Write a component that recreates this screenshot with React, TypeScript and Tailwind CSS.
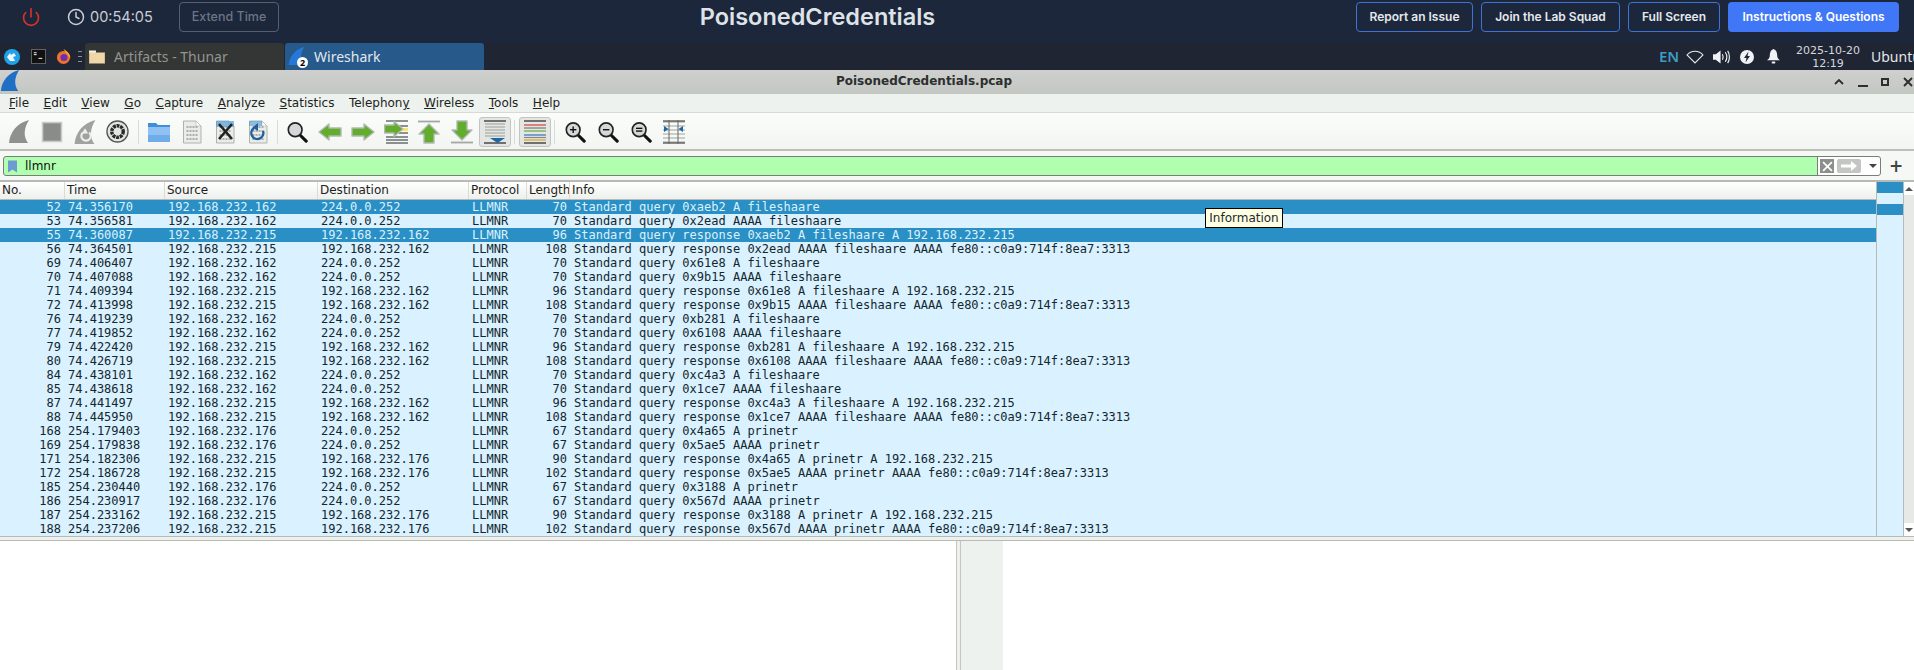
import { Clock, Power } from "lucide-react"

const rows = [
    ["52", "74.356170", "192.168.232.162", "224.0.0.252", "70", "Standard query 0xaeb2 A fileshaare"],
    ["53", "74.356581", "192.168.232.162", "224.0.0.252", "70", "Standard query 0x2ead AAAA fileshaare"],
    ["55", "74.360087", "192.168.232.215", "192.168.232.162", "96", "Standard query response 0xaeb2 A fileshaare A 192.168.232.215"],
    ["56", "74.364501", "192.168.232.215", "192.168.232.162", "108", "Standard query response 0x2ead AAAA fileshaare AAAA fe80::c0a9:714f:8ea7:3313"],
    ["69", "74.406407", "192.168.232.162", "224.0.0.252", "70", "Standard query 0x61e8 A fileshaare"],
    ["70", "74.407088", "192.168.232.162", "224.0.0.252", "70", "Standard query 0x9b15 AAAA fileshaare"],
    ["71", "74.409394", "192.168.232.215", "192.168.232.162", "96", "Standard query response 0x61e8 A fileshaare A 192.168.232.215"],
    ["72", "74.413998", "192.168.232.215", "192.168.232.162", "108", "Standard query response 0x9b15 AAAA fileshaare AAAA fe80::c0a9:714f:8ea7:3313"],
    ["76", "74.419239", "192.168.232.162", "224.0.0.252", "70", "Standard query 0xb281 A fileshaare"],
    ["77", "74.419852", "192.168.232.162", "224.0.0.252", "70", "Standard query 0x6108 AAAA fileshaare"],
    ["79", "74.422420", "192.168.232.215", "192.168.232.162", "96", "Standard query response 0xb281 A fileshaare A 192.168.232.215"],
    ["80", "74.426719", "192.168.232.215", "192.168.232.162", "108", "Standard query response 0x6108 AAAA fileshaare AAAA fe80::c0a9:714f:8ea7:3313"],
    ["84", "74.438101", "192.168.232.162", "224.0.0.252", "70", "Standard query 0xc4a3 A fileshaare"],
    ["85", "74.438618", "192.168.232.162", "224.0.0.252", "70", "Standard query 0x1ce7 AAAA fileshaare"],
    ["87", "74.441497", "192.168.232.215", "192.168.232.162", "96", "Standard query response 0xc4a3 A fileshaare A 192.168.232.215"],
    ["88", "74.445950", "192.168.232.215", "192.168.232.162", "108", "Standard query response 0x1ce7 AAAA fileshaare AAAA fe80::c0a9:714f:8ea7:3313"],
    ["168", "254.179403", "192.168.232.176", "224.0.0.252", "67", "Standard query 0x4a65 A prinetr"],
    ["169", "254.179838", "192.168.232.176", "224.0.0.252", "67", "Standard query 0x5ae5 AAAA prinetr"],
    ["171", "254.182306", "192.168.232.215", "192.168.232.176", "90", "Standard query response 0x4a65 A prinetr A 192.168.232.215"],
    ["172", "254.186728", "192.168.232.215", "192.168.232.176", "102", "Standard query response 0x5ae5 AAAA prinetr AAAA fe80::c0a9:714f:8ea7:3313"],
    ["185", "254.230440", "192.168.232.176", "224.0.0.252", "67", "Standard query 0x3188 A prinetr"],
    ["186", "254.230917", "192.168.232.176", "224.0.0.252", "67", "Standard query 0x567d AAAA prinetr"],
    ["187", "254.233162", "192.168.232.215", "192.168.232.176", "90", "Standard query response 0x3188 A prinetr A 192.168.232.215"],
    ["188", "254.237206", "192.168.232.215", "192.168.232.176", "102", "Standard query response 0x567d AAAA prinetr AAAA fe80::c0a9:714f:8ea7:3313"],
]

const columns = [
    { label: "No.", width: "w-[65px]" },
    { label: "Time", width: "w-[100px]" },
    { label: "Source", width: "w-[153px]" },
    { label: "Destination", width: "w-[151px]" },
    { label: "Protocol", width: "w-[58px]" },
    { label: "Length", width: "w-[43px]" },
]

const menus: [string, string, string][] = [
    ["", "F", "ile"],
    ["", "E", "dit"],
    ["", "V", "iew"],
    ["", "G", "o"],
    ["", "C", "apture"],
    ["", "A", "nalyze"],
    ["", "S", "tatistics"],
    ["Telephon", "y", ""],
    ["", "W", "ireless"],
    ["", "T", "ools"],
    ["", "H", "elp"],
]

function Fin({ className, fill }: { className?: string; fill: string }) {
    return (
        <svg viewBox="0 0 20 23" className={className}>
            <path d="M0 23 C1 12 8 3 20 0 C15 8 14 16 19 23 Z" fill={fill} />
        </svg>
    )
}

function Magnifier({ mark }: { mark?: "plus" | "minus" | "equal" }) {
    return (
        <svg viewBox="0 0 24 24" className="w-[22px] h-[22px]">
            <line x1="15" y1="15" x2="22" y2="22" stroke="#111" strokeWidth="3.4" strokeLinecap="round" />
            <circle cx="10" cy="9.5" r="7.5" fill="#d5d8d8" stroke="#222" strokeWidth="1.8" />
            {mark && <line x1="6.5" y1={mark === "equal" ? 8 : 9.5} x2="13.5" y2={mark === "equal" ? 8 : 9.5} stroke="#111" strokeWidth="1.5" />}
            {mark === "equal" && <line x1="6.5" y1="11" x2="13.5" y2="11" stroke="#111" strokeWidth="1.5" />}
            {mark === "plus" && <line x1="10" y1="6" x2="10" y2="13" stroke="#111" strokeWidth="1.5" />}
        </svg>
    )
}

function Arrow({ points }: { points: string }) {
    return <polygon points={points} fill="#62ad2c" stroke="#b4b8b2" strokeWidth="1.4" strokeLinejoin="round" />
}

function PaperIcon({ children }: { children?: React.ReactNode }) {
    return (
        <svg viewBox="0 0 24 24" className="w-6 h-6">
            <path d="M3.5 1 H16 L21 6 V23 H3.5 Z" fill="#e9ede6" stroke="#aeb2ac" />
            <path d="M16 1 V6 H21 Z" fill="#fff" stroke="#aeb2ac" strokeWidth="0.6" />
            {[7, 11, 15, 19].map(y => (
                <line key={y} x1="6.5" y1={y} x2="18" y2={y} stroke="#a9aeb0" strokeWidth="2" strokeDasharray="2 1" />
            ))}
            {children}
        </svg>
    )
}

function ToolIcon({ name }: { name: string }) {
    switch (name) {
        case "start":
            return <Fin className="w-[20px] h-[23px]" fill="#8f918e" />
        case "stop":
            return (
                <svg viewBox="0 0 24 24" className="w-6 h-6">
                    <rect x="2.5" y="2.5" width="19" height="19" fill="#8a8c89" stroke="#c9ccc8" strokeWidth="1.6" />
                </svg>
            )
        case "restart":
            return (
                <svg viewBox="0 0 20 23" className="w-[22px] h-[24px]">
                    <path d="M0 23 C1 12 8 3 20 0 C15 8 14 16 19 23 Z" fill="#a0a29f" />
                    <path d="M8 12 A4.5 4.5 0 1 0 14 12" fill="none" stroke="#eef0ec" strokeWidth="2" />
                    <path d="M10 8 L13 13 L7 13 Z" fill="#eef0ec" />
                </svg>
            )
        case "options":
            return (
                <svg viewBox="0 0 24 24" className="w-[23px] h-[23px]">
                    <circle cx="12" cy="12" r="11" fill="#e4e6e3" stroke="#555" strokeWidth="1.4" />
                    <circle cx="12" cy="12" r="6" fill="none" stroke="#2b2b2b" strokeWidth="3.6" strokeDasharray="3 0.8" />
                    <circle cx="12" cy="12" r="3" fill="#e4e6e3" />
                </svg>
            )
        case "open":
            return (
                <svg viewBox="0 0 24 24" className="w-6 h-6">
                    <path d="M1 3 H9 L11 5 H23 V22 H1 Z" fill="#3f8fd8" />
                    <rect x="1" y="7" width="22" height="15" fill="#8fc1f2" />
                    <rect x="1" y="15" width="22" height="7" fill="#6fadea" />
                </svg>
            )
        case "file":
            return <PaperIcon />
        case "close":
            return (
                <PaperIcon>
                    <path d="M3 1 H21 V7 H3 Z" fill="#4f9fd8" opacity="0.7" />
                    <path d="M6 4 L19 19 M19 4 L6 19" stroke="#222" strokeWidth="2.6" />
                </PaperIcon>
            )
        case "reload":
            return (
                <PaperIcon>
                    <path d="M3 1 H16 V6 H3 Z" fill="#4f9fd8" opacity="0.6" />
                    <path d="M8 8 A6 6 0 1 0 17 11" fill="none" stroke="#235f9f" strokeWidth="2.4" />
                    <path d="M12 3 L12 11 L6.5 7.5 Z" fill="#235f9f" />
                </PaperIcon>
            )
        case "find":
            return <Magnifier />
        case "back":
            return (
                <svg viewBox="0 0 24 24" className="w-6 h-6">
                    <Arrow points="1,12 11,4 11,8 23,8 23,16 11,16 11,20" />
                </svg>
            )
        case "forward":
            return (
                <svg viewBox="0 0 24 24" className="w-6 h-6">
                    <Arrow points="23,12 13,4 13,8 1,8 1,16 13,16 13,20" />
                </svg>
            )
        case "goto":
            return (
                <svg viewBox="0 0 24 24" className="w-6 h-6">
                    {[1, 17, 20, 23].map(y => (
                        <line key={y} x1="2" y1={y} x2="24" y2={y} stroke="#1f2a2a" strokeWidth="1" />
                    ))}
                    <line x1="15" y1="6" x2="24" y2="6" stroke="#1f2a2a" />
                    <rect x="15" y="8" width="9" height="3" fill="#f5e76a" />
                    <line x1="15" y1="13" x2="24" y2="13" stroke="#1f2a2a" />
                    <Arrow points="19,9 10,1.5 10,5 0.5,5 0.5,13 10,13 10,16.5" />
                </svg>
            )
        case "top":
            return (
                <svg viewBox="0 0 24 24" className="w-6 h-6">
                    <line x1="1" y1="1.5" x2="23" y2="1.5" stroke="#a4a8a2" strokeWidth="1.8" />
                    <Arrow points="12,4 22,14 17,14 17,23 7,23 7,14 2,14" />
                </svg>
            )
        case "bottom":
            return (
                <svg viewBox="0 0 24 24" className="w-6 h-6">
                    <line x1="1" y1="22.5" x2="23" y2="22.5" stroke="#a4a8a2" strokeWidth="1.8" />
                    <Arrow points="12,20 22,10 17,10 17,1 7,1 7,10 2,10" />
                </svg>
            )
        case "autoscroll":
            return (
                <svg viewBox="0 0 24 24" className="w-6 h-6">
                    <line x1="1" y1="1" x2="23" y2="1" stroke="#222" strokeWidth="1.2" />
                    {[4, 7, 10, 13, 16].map(y => (
                        <line key={y} x1="2" y1={y} x2="22" y2={y} stroke="#9a9e98" strokeWidth="1" />
                    ))}
                    <line x1="1" y1="23" x2="23" y2="23" stroke="#222" strokeWidth="1.2" />
                    <path d="M7 18 H22 L14.5 23 Z" fill="#1f66a6" />
                </svg>
            )
        case "colorize":
            return (
                <svg viewBox="0 0 24 24" className="w-6 h-6">
                    {[
                        ["#222", 1],
                        ["#d63b3b", 5],
                        ["#777", 8],
                        ["#5fae3a", 11],
                        ["#3a6fc4", 15],
                        ["#888", 17.5],
                        ["#d8a52a", 20],
                        ["#222", 23],
                    ].map(([c, y]) => (
                        <line key={y as number} x1="1" y1={y as number} x2="23" y2={y as number} stroke={c as string} strokeWidth="1.2" />
                    ))}
                </svg>
            )
        case "zoomIn":
            return <Magnifier mark="plus" />
        case "zoomOut":
            return <Magnifier mark="minus" />
        case "zoomNormal":
            return <Magnifier mark="equal" />
        case "resize":
            return (
                <svg viewBox="0 0 24 24" className="w-6 h-6">
                    {[1, 5, 9, 13, 17, 21].map(y => (
                        <line key={y} x1="1" y1={y + 1} x2="23" y2={y + 1} stroke="#9ea39c" />
                    ))}
                    <line x1="1" y1="1" x2="23" y2="1" stroke="#222" />
                    <line x1="1" y1="23" x2="23" y2="23" stroke="#222" />
                    <line x1="7" y1="0" x2="7" y2="24" stroke="#666" />
                    <line x1="16" y1="0" x2="16" y2="24" stroke="#666" />
                    <path d="M2 6 L6.5 9 L2 12 Z M21 6 L16.5 9 L21 12 Z" fill="#1f66a6" />
                </svg>
            )
        default:
            return null
    }
}

function ToolGroup({ names, pressed }: { names: string[]; pressed?: boolean }) {
    return (
        <>
            {names.map(name => (
                <div key={name} className="w-[33px] h-[30px] flex items-center justify-center">
                    <div className={pressed || name === "autoscroll" ? "w-[32px] h-[30px] flex items-center justify-center rounded-[3px] border border-[#c2c5c1] bg-[#e4e6e3]" : "flex items-center justify-center"}>
                        <ToolIcon name={name} />
                    </div>
                </div>
            ))}
        </>
    )
}

function ToolSep({ className }: { className: string }) {
    return (
        <div className={`${className} flex justify-center`}>
            <div className="w-px h-[24px] bg-[#d8dbd6]" />
        </div>
    )
}

function TopBar() {
    return (
        <div className="h-[43px] shrink-0 bg-[#1c273b] flex items-start pt-[2px] pr-[15px] font-['Inter',sans-serif]">
            <div className="flex items-center h-[30px]">
                <Power className="w-[20px] h-[20px] ml-[21px] text-[#d5312e]" strokeWidth={2} />
                <Clock className="w-[18px] h-[18px] ml-[26px] text-[#c9ced6]" strokeWidth={2} />
                <span className="ml-[5px] w-[61px] text-[14.5px] text-[#c9ced6]">00:54:05</span>
                <div className="ml-[28px] w-[100px] h-[30px] rounded border border-[#55606f] flex items-center justify-center text-[12.5px] font-medium text-[#6b7584]">
                    Extend Time
                </div>
            </div>
            <div className="flex-1 text-center text-[23.5px] leading-[30px] font-semibold text-[#dfe3e8]">PoisonedCredentials</div>
            <div className="flex gap-2 h-[30px] text-[12px] font-semibold text-[#e4e8ee]">
                <div className="w-[117px] rounded border border-[#3e74d6] flex items-center justify-center">Report an Issue</div>
                <div className="w-[139px] rounded border border-[#3e74d6] flex items-center justify-center">Join the Lab Squad</div>
                <div className="w-[92px] rounded border border-[#3e74d6] flex items-center justify-center">Full Screen</div>
                <div className="w-[171px] rounded bg-[#4077f6] flex items-center justify-center text-white">Instructions & Questions</div>
            </div>
        </div>
    )
}

function TaskBar() {
    return (
        <div className="h-[27px] shrink-0 bg-[#1f2533] flex items-center overflow-hidden font-['Noto_Sans',sans-serif] text-[14px]">
            <svg viewBox="0 0 16 16" className="w-[16px] h-[16px] ml-[4px]">
                <circle cx="8" cy="8" r="8" fill="#1fa3e8" />
                <path d="M3 8 L6 4 L7 6 L10 4 L12 7 L9 8 L11 12 L6 12 Z" fill="#f1f7fb" />
            </svg>
            <svg viewBox="0 0 16 16" className="w-[15px] h-[15px] ml-[11px]">
                <rect x="0.5" y="0.5" width="15" height="15" fill="#111" stroke="#666" />
                <path d="M3 4 H6 M3 6 H6" stroke="#fff" />
                <path d="M8 10 H12" stroke="#fff" />
            </svg>
            <svg viewBox="0 0 16 16" className="w-[15px] h-[15px] ml-[10px]">
                <circle cx="8" cy="9" r="7" fill="#f0702a" />
                <path d="M8 0 C13 3 16 7 15 10 C13 5 10 4 8 0 Z" fill="#fbb32f" />
                <circle cx="8.5" cy="9" r="3.8" fill="#6b2fb3" />
            </svg>
            <div className="ml-[7px] w-[4px] h-[11px] flex flex-col justify-between">
                <div className="h-px bg-[#8a8f98]" />
                <div className="h-px bg-[#8a8f98]" />
                <div className="h-px bg-[#8a8f98]" />
            </div>
            <div className="ml-[3px] w-[199px] h-[27px] bg-[#343535] rounded-t-[3px] flex items-center text-[#92958f]">
                <svg viewBox="0 0 16 14" className="w-[16px] h-[15px] ml-[4px]">
                    <path d="M0 2 H6 L7 3 H16 V14 H0 Z" fill="#f0d7a8" stroke="#8d8471" strokeWidth="0.6" />
                    <rect x="0" y="1" width="7" height="2" fill="#f6f1e7" />
                </svg>
                <span className="ml-[9px]">Artifacts - Thunar</span>
            </div>
            <div className="ml-px w-[199px] h-[27px] bg-[#275a8a] rounded-t-[3px] flex items-center text-[#e3e8ee]">
                <div className="relative w-[19px] h-[20px] ml-[3px]">
                    <Fin className="w-[17px] h-[18px]" fill="#2778d6" />
                    <div className="absolute right-[-1px] bottom-[-1px] w-[11px] h-[11px] rounded-full bg-white text-black text-[9px] leading-[11px] text-center font-bold">2</div>
                </div>
                <span className="ml-[7px]">Wireshark</span>
            </div>
            <div className="flex-1" />
            <span className="w-[18px] text-[15px] font-semibold text-[#3d9bc4] mr-[9px]">EN</span>
            <svg viewBox="0 0 18 14" className="w-[18px] h-[14px] mr-[9px]">
                <path d="M1 5 C5 0 13 0 17 5 L9 13 Z" fill="none" stroke="#e6e8ec" strokeWidth="1.1" />
            </svg>
            <svg viewBox="0 0 18 16" className="w-[17px] h-[16px] mr-[10px]">
                <path d="M0 5 H3 L8 1 V15 L3 11 H0 Z" fill="#f0f2f5" />
                <path d="M10 5 C11 7 11 9 10 11 M13 3 C15 6 15 10 13 13 M15.5 1.5 C18 5 18 11 15.5 14.5" fill="none" stroke="#f0f2f5" strokeWidth="1.2" />
            </svg>
            <svg viewBox="0 0 14 14" className="w-[14px] h-[14px] mr-[13px]">
                <circle cx="7" cy="7" r="7" fill="#f0f2f5" />
                <path d="M8.5 1.5 L4 8 H6.5 L5.5 12.5 L10 6 H7.5 Z" fill="#1f2533" />
            </svg>
            <svg viewBox="0 0 14 16" className="w-[13px] h-[15px] mr-[16px]">
                <path d="M7 0 C10 1 11 4 11 7 C11 9 12 11 14 12 H0 C2 11 3 9 3 7 C3 4 4 1 7 0 Z" fill="#f0f2f5" />
                <rect x="5" y="13.5" width="4" height="2" rx="1" fill="#f0f2f5" />
            </svg>
            <div className="w-[64px] text-center text-[11px] leading-[13px] whitespace-nowrap text-[#d5d8dd] font-['DejaVu_Sans',sans-serif] mr-[11px]">
                <div>2025-10-20</div>
                <div>12:19</div>
            </div>
            <span className="w-[43px] whitespace-nowrap overflow-hidden text-[#e3e6ea]">Ubuntu</span>
        </div>
    )
}

function TitleBar() {
    return (
        <div className="h-[24px] shrink-0 bg-gradient-to-b from-[#cfd0ce] to-[#c3c7c2] relative flex items-center justify-center pr-[66px] pb-[2px]">
            <Fin className="absolute left-0 top-0 w-[20px] h-[21px]" fill="#1f6fc4" />
            <span className="text-[12px] font-bold text-[#2c2f2e]">PoisonedCredentials.pcap</span>
            <div className="absolute right-0 top-0 h-[24px] flex items-center">
                <svg viewBox="0 0 10 6" className="w-[10px] h-[6px] mr-[14px]">
                    <path d="M1 5 L5 1 L9 5" fill="none" stroke="#2c2f2e" strokeWidth="1.8" />
                </svg>
                <div className="w-[10px] h-[2px] bg-[#2c2f2e] mt-[8px] mr-[13px]" />
                <div className="w-[8px] h-[8px] border-2 border-[#2c2f2e] mr-[14px]" />
                <svg viewBox="0 0 10 10" className="w-[10px] h-[10px] mr-px">
                    <path d="M1 1 L9 9 M9 1 L1 9" stroke="#2c2f2e" strokeWidth="1.9" />
                </svg>
            </div>
        </div>
    )
}

function MenuBar() {
    return (
        <div className="h-[19px] shrink-0 bg-[#eef2ee] border-b border-[#d6d9d5] pl-[9px] flex items-center gap-[14.5px] text-[12px] text-[#1c2422]">
            {menus.map(([before, mnemonic, after]) => (
                <span key={before + mnemonic + after}>
                    {before}
                    <span className="underline">{mnemonic}</span>
                    {after}
                </span>
            ))}
        </div>
    )
}

function Toolbar() {
    return (
        <div className="h-[38px] shrink-0 pl-[2px] pt-[1px] flex items-center bg-gradient-to-b from-[#fbfdfb] to-[#f3f5f3] border-b-2 border-[#bdbfbb]">
            <ToolGroup names={["start", "stop", "restart", "options"]} />
            <ToolSep className="w-[8px]" />
            <ToolGroup names={["open", "file", "close", "reload"]} />
            <ToolSep className="w-[6px]" />
            <ToolGroup names={["find", "back", "forward", "goto", "top", "bottom", "autoscroll"]} />
            <ToolSep className="w-[7px]" />
            <ToolGroup names={["colorize"]} pressed />
            <ToolSep className="w-[7px]" />
            <ToolGroup names={["zoomIn", "zoomOut", "zoomNormal", "resize"]} />
        </div>
    )
}

function FilterBar() {
    return (
        <div className="h-[31px] shrink-0 bg-[#f6f8f5] border-b-2 border-[#b8bab6] pl-[3px] pt-[1px] flex items-center">
            <div className="w-[1878px] h-[20px] rounded-[3px] border border-[#7b7d7b] bg-[#afffaf] flex items-center">
                <svg viewBox="0 0 12 16" className="w-[9px] h-[15px] ml-[4px] shrink-0">
                    <path d="M0 0 H12 V16 L6 12 L0 16 Z" fill="#6b9bd0" />
                </svg>
                <span className="ml-[8px] flex-1 text-[12px] leading-[18px] text-[#111] font-['DejaVu_Sans',sans-serif]">llmnr</span>
                <div className="w-[63px] h-[18px] bg-white rounded-r-[3px] border-l border-[#7b7d7b] flex items-center">
                    <div className="ml-[2px] w-[14px] h-[14px] bg-[#8d8f8c] flex items-center justify-center">
                        <svg viewBox="0 0 10 10" className="w-[11px] h-[11px]">
                            <path d="M1 1 L9 9 M9 1 L1 9" stroke="#fff" strokeWidth="1.5" />
                        </svg>
                    </div>
                    <div className="ml-[3px] w-[24px] h-[14px] bg-[#c4c6c3] rounded-[2px] flex items-center justify-center">
                        <svg viewBox="0 0 16 10" className="w-[16px] h-[10px]">
                            <path d="M0 3.5 H10 V0 L16 5 L10 10 V6.5 H0 Z" fill="#fff" />
                        </svg>
                    </div>
                    <div className="ml-[8px] w-0 h-0 border-x-[4px] border-x-transparent border-t-[4px] border-t-[#444]" />
                </div>
            </div>
            <span className="ml-[8px] text-[17px] leading-none font-bold text-[#444] font-['DejaVu_Sans',sans-serif]">+</span>
        </div>
    )
}

function PacketTable() {
    return (
        <div className="w-[1876px] shrink-0 font-['DejaVu_Sans_Mono',monospace] text-[12px] relative">
            <div className="h-[18px] flex bg-gradient-to-b from-[#ffffff] to-[#edf0ec] border-b border-[#b8bab6] font-['DejaVu_Sans',sans-serif] text-[#1c2422]">
                {columns.map(col => (
                    <div key={col.label} className={`${col.width} h-[17px] pl-[2px] leading-[17px] border-r border-[#d8dbd6] overflow-hidden whitespace-nowrap`}>
                        {col.label}
                    </div>
                ))}
                <div className="flex-1 pl-[2px] leading-[17px]">Info</div>
            </div>
            {rows.map((row, i) => {
                const selected = i === 0 || i === 2
                return (
                    <div
                        key={row[0]}
                        className={
                            selected
                                ? "h-[14px] flex leading-[14px] whitespace-nowrap bg-[#298fc5] text-[#dcf1fc]"
                                : "h-[14px] flex leading-[14px] whitespace-nowrap bg-[#daf1ff] text-[#12272e]"
                        }
                    >
                        <div className="w-[65px] text-right pr-[4px]">{row[0]}</div>
                        <div className="w-[100px] pl-[3px]">{row[1]}</div>
                        <div className="w-[153px] pl-[3px]">{row[2]}</div>
                        <div className="w-[151px] pl-[3px]">{row[3]}</div>
                        <div className="w-[58px] pl-[3px]">LLMNR</div>
                        <div className="w-[43px] text-right pr-[3px]">{row[4]}</div>
                        <div className="flex-1 pl-[4px]">{row[5]}</div>
                    </div>
                )
            })}
            <div className="absolute left-[1205px] top-[26px] w-[78px] h-[20px] border border-black bg-[#ffffe1] text-center font-['DejaVu_Sans',sans-serif] leading-[18px] text-[#1d2a35]">
                Information
            </div>
        </div>
    )
}

function Minimap() {
    return (
        <div className="flex-1 flex">
            <div className="w-[28px] border-x border-[#b8bab6] bg-[#daf1ff] flex flex-col">
                <div className="h-[11px] bg-[#298fc5]" />
                <div className="h-[11px]" />
                <div className="h-[11px] bg-[#298fc5]" />
            </div>
            <div className="flex-1 flex flex-col bg-[#e6e9e5]">
                <div className="h-[13px] bg-white flex items-center justify-center">
                    <div className="w-0 h-0 border-x-[4px] border-x-transparent border-b-[4px] border-b-[#555]" />
                </div>
                <div className="flex-1" />
                <div className="h-[13px] bg-white flex items-center justify-center">
                    <div className="w-0 h-0 border-x-[4px] border-x-transparent border-t-[4px] border-t-[#555]" />
                </div>
            </div>
        </div>
    )
}

export default function App() {
    return (
        <div className="w-[1914px] h-[670px] flex flex-col overflow-hidden bg-white">
            <TopBar />
            <TaskBar />
            <div className="flex-1 flex flex-col font-['DejaVu_Sans',sans-serif] min-h-0">
                <TitleBar />
                <MenuBar />
                <Toolbar />
                <FilterBar />
                <div className="h-[354px] shrink-0 flex overflow-hidden">
                    <PacketTable />
                    <Minimap />
                </div>
                <div className="h-[5px] shrink-0 bg-[#eef0ec] border-y border-[#b8bab6]" />
                <div className="flex-1 flex min-h-0">
                    <div className="w-[956px] bg-white" />
                    <div className="w-[5px] bg-[#eef0ec] border-x border-[#c4c6c2]" />
                    <div className="w-[42px] bg-[#eef2ee]" />
                    <div className="flex-1 bg-white" />
                </div>
            </div>
        </div>
    )
}
